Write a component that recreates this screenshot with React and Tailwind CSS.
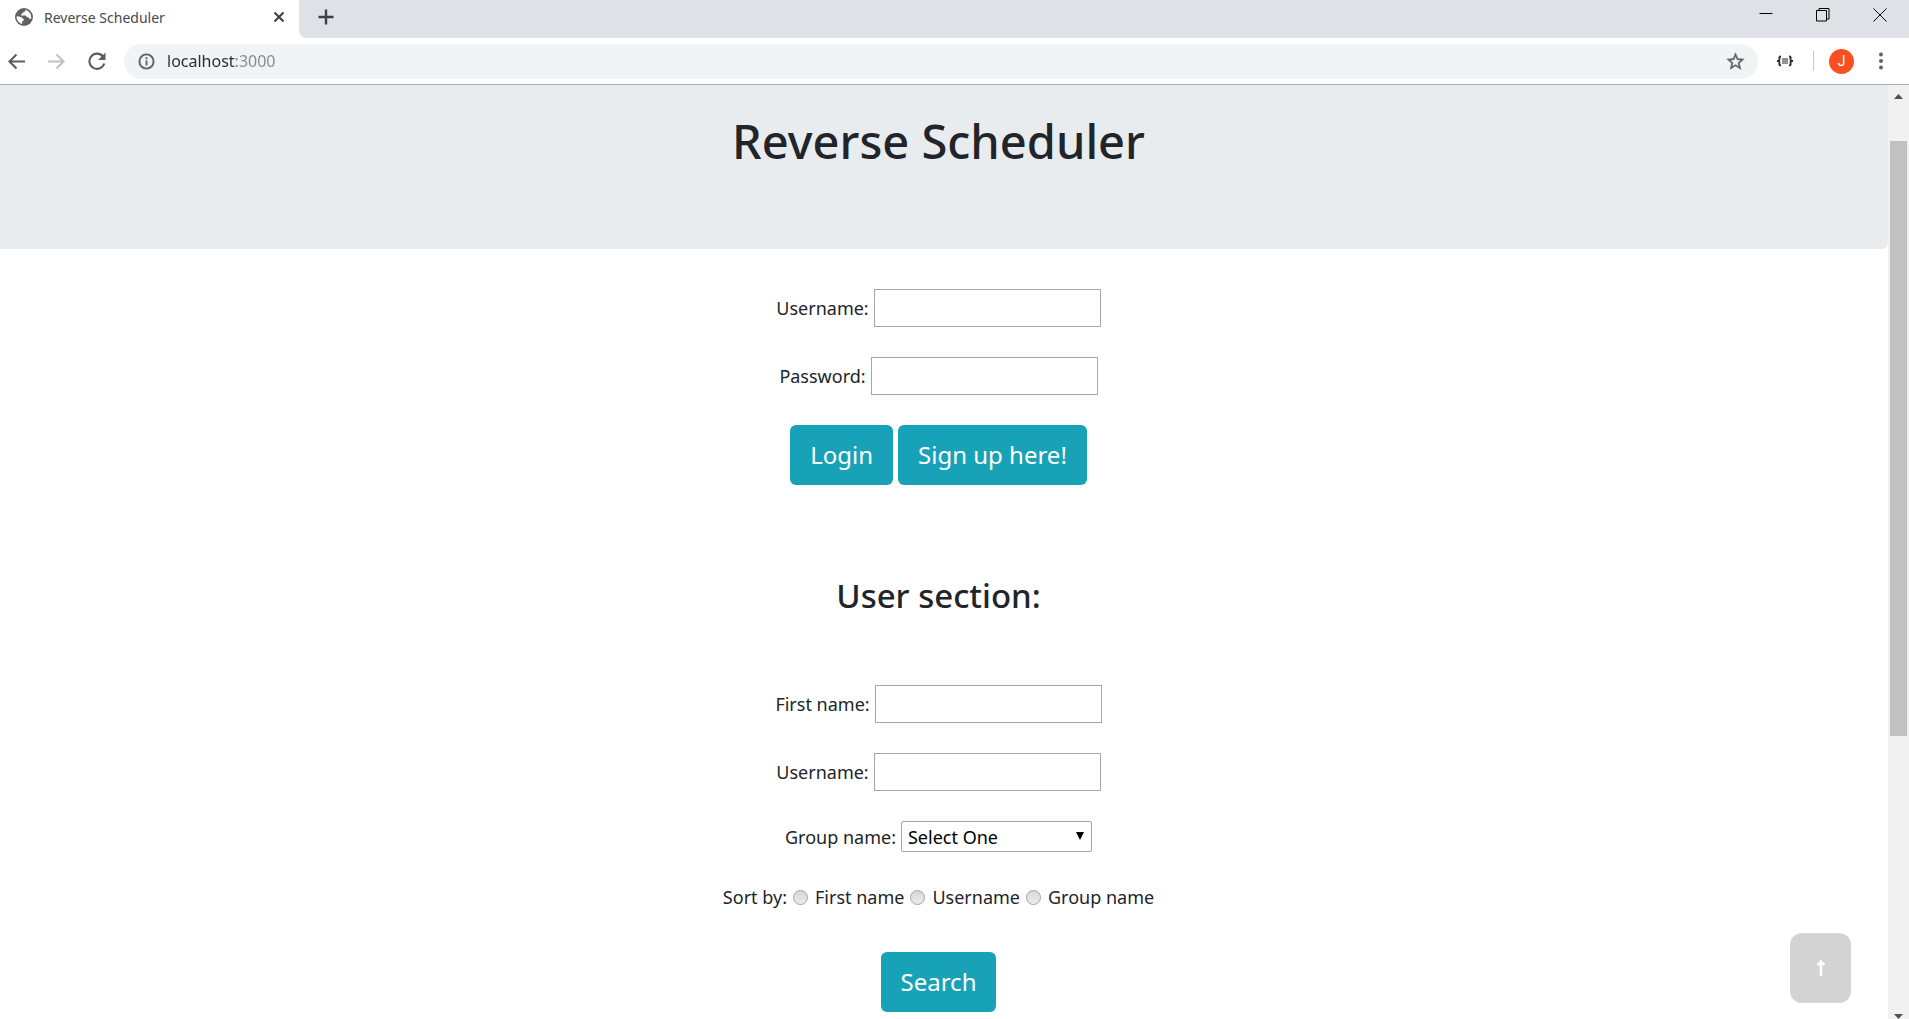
const INK = "text-[#212529]";

function Globe() {
  return (
    <svg viewBox="0 0 24 24" className="size-[22px] shrink-0" aria-hidden="true">
      <circle cx="12" cy="12" r="9.800" fill="#5f6368" />
      <path
        d="M13.500 4.200c.6 1.500-.6 2.300-2 2.600-1 .2-.8 1.500-2 1.800-.9.2-1 1.300-.2 1.700h4.200c1 0 1.400 1.100 1.400 2 .9.200 2.300-.2 2.800 1 .3.700.9 1.100 1.500.9.400-.1.600-.5.700-1 .3-3.800-2-7.900-6.400-9zM4 11.300c1.600.1 3.500.6 5.200 1 1.300.4 1.300 1.500 2.300 2 .9.400.4 1.700-.5 1.900-.8.200-1 .9-1 1.700 0 .8-.2 1.400-.6 1.700C6 18.400 3.700 15 4 11.300z"
        fill="#fff"
      />
    </svg>
  );
}

function TabStrip() {
  return (
    <div className="flex h-[38px] bg-white">
      <div className="flex w-[299px] items-center bg-white pb-1 pl-[13px] pr-[14px]">
        <Globe />
        <span className="ml-[9px] flex-1 text-[14px] text-[#45494d]">Reverse Scheduler</span>
        <button aria-label="Close tab">
          <svg viewBox="0 0 12 12" className="size-3" stroke="#3c4043" strokeWidth="2" fill="none">
            <path d="M1.500 1.500l9 9M10.500 1.500l-9 9" />
          </svg>
        </button>
      </div>
      <div className="flex flex-1 items-center rounded-bl-lg bg-[#dee1e6] pb-1 pl-[19px]">
        <button aria-label="New tab">
          <svg viewBox="0 0 16 16" className="size-4" stroke="#3c4043" strokeWidth="2.400" fill="none">
            <path d="M8 0.500v15M0.500 8h15" />
          </svg>
        </button>
      </div>
      <div className="flex items-start gap-[43px] bg-[#dee1e6] pr-[22px] pt-2">
        <button aria-label="Minimize">
          <svg viewBox="0 0 14 14" className="size-[14px]" stroke="#000" fill="none">
            <path d="M0.500 5.500h13" />
          </svg>
        </button>
        <button aria-label="Restore">
          <svg viewBox="0 0 14 14" className="size-[14px]" stroke="#000" fill="none">
            <path d="M0.500 2.500h10v10.500h-10zM3 2.500V0.500h10v10.500h-2" />
          </svg>
        </button>
        <button aria-label="Close window">
          <svg viewBox="0 0 14 14" className="size-[14px]" stroke="#000" fill="none">
            <path d="M0.500 0.500l13 13M13.500 0.500l-13 13" />
          </svg>
        </button>
      </div>
    </div>
  );
}

function Toolbar() {
  return (
    <div className="flex h-[47px] items-center border-b border-[#a9a9a9] bg-white">
      <div className="flex items-center gap-[23px] pl-2">
        <button aria-label="Back">
          <svg viewBox="0 0 18 18" className="size-[17px]" stroke="#5a5d61" strokeWidth="2.200" fill="none">
            <path d="M18 9H2M9 1.500L1.500 9 9 16.500" />
          </svg>
        </button>
        <button aria-label="Forward">
          <svg viewBox="0 0 18 18" className="size-[17px]" stroke="#c0c2c4" strokeWidth="2.200" fill="none">
            <path d="M0 9h16M9 1.500L16.500 9 9 16.500" />
          </svg>
        </button>
        <button aria-label="Reload">
          <svg viewBox="0 0 18 18" className="size-[18px]" fill="none">
            <path d="M15 4.500A7.600 7.600 0 1 0 16.300 11.500" stroke="#5a5d61" strokeWidth="2.100" />
            <path d="M17.500 0.500v7.500H10z" fill="#5a5d61" />
          </svg>
        </button>
      </div>
      <div className="ml-[18px] flex h-[35px] flex-1 items-center rounded-full bg-[#f1f3f4] pl-[14px] pr-3">
        <svg viewBox="0 0 18 18" className="size-[17px] shrink-0" fill="none" stroke="#5f6368" strokeWidth="2" aria-hidden="true">
          <circle cx="9" cy="9" r="7.500" />
          <path d="M9 8v5.300M9 4.500v2" />
        </svg>
        <input
          aria-label="Address"
          defaultValue="localhost:3000"
          className="ml-3 flex-1 bg-[linear-gradient(90deg,#27292c_69px,#85888c_69px)] bg-clip-text text-[16px] text-transparent outline-none"
        />
        <button aria-label="Bookmark this page">
          <svg viewBox="0 0 24 24" className="size-[21px]" fill="#5f6368" stroke="#5f6368" strokeWidth="0.500">
            <path d="M22 9.240l-7.190-.62L12 2 9.190 8.630 2 9.240l5.460 4.730L5.820 21 12 17.270 18.180 21l-1.630-7.030L22 9.240zM12 15.400l-3.760 2.270 1-4.280-3.320-2.880 4.380-.38L12 6.100l1.710 4.040 4.380.38-3.320 2.880 1 4.280L12 15.400z" />
          </svg>
        </button>
      </div>
      <button aria-label="Extension" className="ml-[18px]">
        <svg viewBox="0 0 18 12" className="h-3 w-[18px]" stroke="#2b2b2b" fill="none">
          <path d="M5 1.500C2.500 1.500 3.500 3 3.500 4.500S2.500 6 1 6c1.500 0 2.500 0 2.500 1.500S2.500 10.500 5 10.500M13 1.500c2.500 0 1.500 1.500 1.500 3S15.500 6 17 6c-1.500 0-2.500 0-2.500 1.500s1 3-1.500 3" strokeWidth="1.800" />
          <path d="M6 4h6M6 6h6M6 8h6" strokeWidth="1.200" />
        </svg>
      </button>
      <div className="ml-[19px] h-5 w-px bg-[#c6c8cb]" />
      <button aria-label="Profile" className="ml-[15px] size-[25px] rounded-full bg-[#fa4f20] font-[Roboto,sans-serif] text-[14px] leading-none text-white">
        J
      </button>
      <button aria-label="Menu" className="ml-[25px] mr-[26px]">
        <svg viewBox="0 0 4 18" className="h-[18px] w-1" fill="#5f6368">
          <circle cx="2" cy="2.500" r="2" />
          <circle cx="2" cy="9" r="2" />
          <circle cx="2" cy="15.500" r="2" />
        </svg>
      </button>
    </div>
  );
}

function Field({ id, label, type = "text" }) {
  return (
    <div className="flex items-center gap-[5px]">
      <label htmlFor={id}>{label}</label>
      <input id={id} type={type} className="h-[38px] w-[227px] border border-[#a6a6a6] bg-white px-1" />
    </div>
  );
}

function ActionButton({ children }) {
  return (
    <button className="h-[60px] rounded-md bg-[#17a2b8] px-5 text-[24px] text-white">{children}</button>
  );
}

function SortOption({ label }) {
  return (
    <label className="flex items-center">
      <input
        type="radio"
        name="sort"
        className="mr-[7px] size-[15px] appearance-none rounded-full border border-[#a3a3a3] bg-linear-to-b from-[#d8d8d8] to-[#ececec]"
      />
      {label}
    </label>
  );
}

function ScrollBar() {
  return (
    <div className="flex w-[21px] flex-col items-center bg-[#f1f1f1]" aria-hidden="true">
      <div className="flex h-[23px] items-center">
        <svg viewBox="0 0 9 5" className="h-[5px] w-[9px]" fill="#505050">
          <path d="M0 5L4.500 0 9 5z" />
        </svg>
      </div>
      <div className="flex w-[17px] flex-1 flex-col">
        <div className="flex-[33]" />
        <div className="flex-[595] bg-[#c1c1c1]" />
        <div className="flex-[278]" />
      </div>
      <svg viewBox="0 0 9 5" className="h-[5px] w-[9px]" fill="#505050">
        <path d="M0 0h9L4.500 5z" />
      </svg>
    </div>
  );
}

export default function App() {
  return (
    <div className="flex h-screen flex-col overflow-hidden bg-white font-['Noto_Sans','Open_Sans',sans-serif]">
      <TabStrip />
      <Toolbar />
      <div className="flex min-h-0 flex-1">
        <main className={`relative flex-1 overflow-hidden text-[18px] leading-[30px] ${INK}`}>
          <header className="rounded-br-md bg-[#e9ecef] pb-[78px] pr-[11px] pt-[26px] text-center">
            <h1 className="text-[47px] font-medium leading-[60px]">Reverse Scheduler</h1>
          </header>
          <div className="flex flex-col items-center pr-[11px] pt-10">
            <form className="flex flex-col items-center gap-[30px]" onSubmit={(e) => e.preventDefault()}>
              <Field id="login-username" label="Username:" />
              <Field id="login-password" label="Password:" type="password" />
              <div className="flex gap-[5px]">
                <ActionButton>Login</ActionButton>
                <ActionButton>Sign up here!</ActionButton>
              </div>
            </form>
            <h2 className="mt-[89px] text-[33px] font-medium leading-[44px]">User section:</h2>
            <form className="mt-[67px] flex flex-col items-center gap-[30px]" onSubmit={(e) => e.preventDefault()}>
              <Field id="first-name" label="First name:" />
              <Field id="username" label="Username:" />
              <div className="flex items-center gap-[5px]">
                <label htmlFor="group">Group name:</label>
                <div className="relative">
                  <select id="group" className="block h-[31px] w-[191px] appearance-none rounded-xs border border-[#a6a6a6] bg-white pl-[6px] leading-[28px] text-black">
                    <option>Select One</option>
                  </select>
                  <svg viewBox="0 0 8 8" className="pointer-events-none absolute right-2 top-[11px] size-2" fill="#000" aria-hidden="true">
                    <path d="M0 0h8L4 8z" />
                  </svg>
                </div>
              </div>
              <div className="flex items-center gap-[6px]">
                <span>Sort by:</span>
                <SortOption label="First name" />
                <SortOption label="Username" />
                <SortOption label="Group name" />
              </div>
              <div className="mt-[10px]">
                <ActionButton>Search</ActionButton>
              </div>
            </form>
          </div>
          <button
            aria-label="Back to top"
            className="absolute bottom-4 right-[37px] flex h-[70px] w-[61px] items-center justify-center rounded-xl bg-[#d3d3d3]"
          >
            <svg viewBox="0 0 8 16" className="h-4 w-2" stroke="#fff" strokeWidth="2.500" fill="none">
              <path d="M4 16V2M0.500 5L4 1.500 7.500 5" />
            </svg>
          </button>
        </main>
        <ScrollBar />
      </div>
    </div>
  );
}
